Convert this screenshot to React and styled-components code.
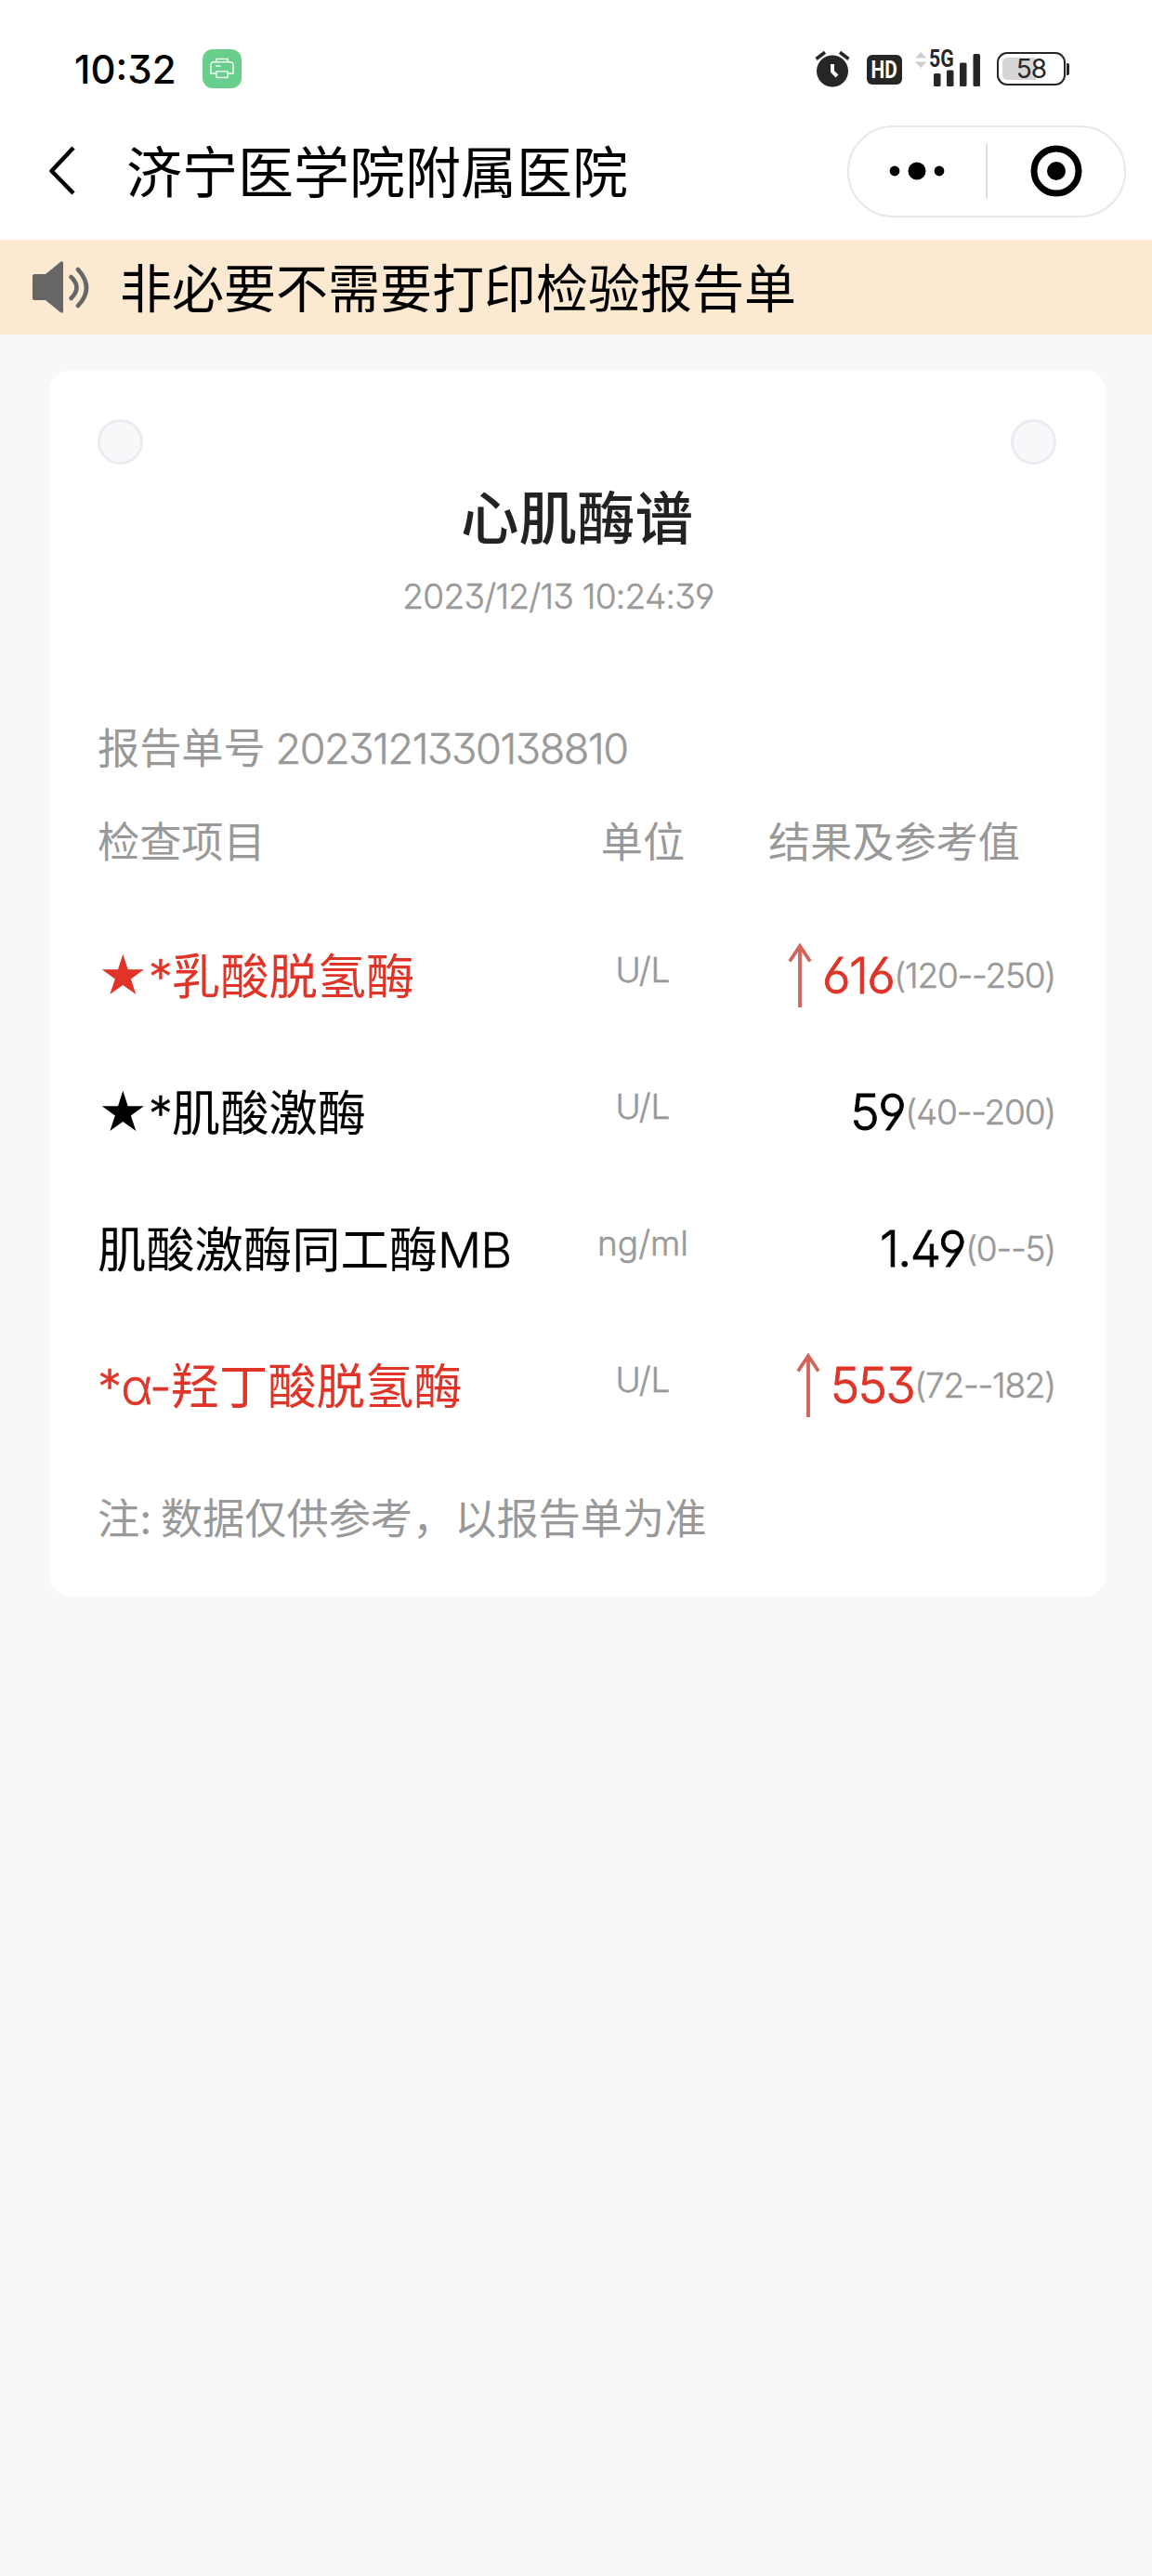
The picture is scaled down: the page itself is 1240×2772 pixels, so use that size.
import React from "react";
import styled, { createGlobalStyle } from "styled-components";

const rows = [
  { name: "★*乳酸脱氢酶", unit: "U/L", value: "616", range: "(120--250)", high: true },
  { name: "★*肌酸激酶", unit: "U/L", value: "59", range: "(40--200)" },
  { name: "肌酸激酶同工酶MB", unit: "ng/ml", value: "1.49", range: "(0--5)" },
  { name: "*α-羟丁酸脱氢酶", unit: "U/L", value: "553", range: "(72--182)", high: true },
];

const App = () => {
  return (
    <Page>
      <GlobalStyle />
      <StatusBar>
        <Clock>10:32</Clock>
        <PrinterBadge>
          <svg width="26" height="24" viewBox="0 0 26 24" fill="none" stroke="#effbf3" strokeWidth="1.6">
            <path d="M6.8 4.6V1.5h12.4v3.1M6.5 17H1V8q0-3.2 3.2-3.2h17.6Q25 4.8 25 8v9h-5.5" />
            <path d="M7 14.8h12v6.7H7zM6 9h5.5" />
          </svg>
        </PrinterBadge>
        <StatusIcons>
          <AlarmIcon />
          <HdBadge>
            <span>HD</span>
          </HdBadge>
          <Signal>
            <SignalIcon />
            <SignalLabel>5G</SignalLabel>
          </Signal>
          <Battery>
            <BatteryLevel />
            <BatteryText>58</BatteryText>
          </Battery>
          <BatteryTip />
        </StatusIcons>
      </StatusBar>

      <NavBar>
        <svg width="30" height="56" viewBox="0 0 30 56" fill="none" stroke="#000" strokeWidth="4.6" strokeLinejoin="round">
          <path d="M27 3 3.5 28 27 52" />
        </svg>
        <NavTitle>济宁医学院附属医院</NavTitle>
        <Capsule>
          <svg width="60" height="20" viewBox="0 0 60 20">
            <circle cx="6" cy="10" r="5.4" />
            <circle cx="30" cy="10" r="9.5" />
            <circle cx="54" cy="10" r="5.4" />
          </svg>
          <CapsuleLine />
          <svg width="56" height="56" viewBox="0 0 56 56">
            <circle cx="28" cy="28" r="24" fill="none" stroke="#000" strokeWidth="7" />
            <circle cx="28" cy="28" r="10" />
          </svg>
        </Capsule>
      </NavBar>

      <Notice>
        <SpeakerIcon />
        <span>非必要不需要打印检验报告单</span>
      </Notice>

      <Card>
        <Holes>
          <Hole />
          <Hole />
        </Holes>
        <Title>心肌酶谱</Title>
        <DateText>2023/12/13 10:24:39</DateText>
        <ReportNo>
          报告单号 <ReportDigits>2023121330138810</ReportDigits>
        </ReportNo>
        <HeadRow>
          <span>检查项目</span>
          <HeadUnit>单位</HeadUnit>
          <HeadResult>结果及参考值</HeadResult>
        </HeadRow>
        {rows.map((row) => (
          <Row key={row.name}>
            <Name $high={row.high}>
              {/* latin parts are set a little tighter than the chinese ones */}
              {row.name.split(/([*α\-A-Z]+)/).map((part, i) =>
                i % 2 ? <Latin key={i}>{part}</Latin> : part
              )}
            </Name>
            <Unit>{row.unit}</Unit>
            <Result>
              {row.high && <ArrowUp />}
              <Value $high={row.high}>{row.value}</Value>
              <Range>{row.range}</Range>
            </Result>
          </Row>
        ))}
        <Note>注: 数据仅供参考，以报告单为准</Note>
      </Card>
    </Page>
  );
};

const AlarmIcon = () => (
  <svg width="38" height="40" viewBox="0 0 38 40" fill="none">
    <circle cx="19" cy="22.5" r="17" fill="#262626" />
    <path d="M1.5 9.5 11 2.2M36.5 9.5 27 2.2" stroke="#262626" strokeWidth="3.6" />
    <path d="M19 15v8l5 5" stroke="#fff" strokeWidth="4" />
  </svg>
);

const SignalIcon = () => (
  <svg width="70" height="38" viewBox="0 0 70 38" fill="#262626">
    <path d="M0 7.5 6.2 1l6.3 6.5zM0 11.5h12.5L6.2 18z" fill="#d0d0d0" />
    <rect x="20" y="24" width="7.5" height="14" rx="1.5" />
    <rect x="34" y="20.5" width="7.5" height="17.5" rx="1.5" />
    <rect x="48" y="12.5" width="7.5" height="25.5" rx="1.5" />
    <rect x="62.5" y="3" width="7.5" height="35" rx="1.5" />
  </svg>
);

const SpeakerIcon = () => (
  <svg width="62" height="56" viewBox="0 0 62 56" fill="none" stroke="#666" strokeLinecap="round">
    <path d="M2 14h12L30 1q3-2 3 1v52q0 3-3 1L14 42H2q-2 0-2-2V16q0-2 2-2z" fill="#666" stroke="none" />
    <path d="M41.5 17q12 11.500 0 23" strokeWidth="4.6" />
    <path d="M49 9q18 20 0 39" strokeWidth="4.6" />
  </svg>
);

const ArrowUp = () => (
  <Arrow width="26" height="70" viewBox="0 0 26 70" fill="none" stroke="#d4625d" strokeWidth="3.8">
    <path d="M13 69V3M2 19.5 13 3l11 16.5" />
  </Arrow>
);

const GlobalStyle = createGlobalStyle`
  body {
    margin: 0;
    background: #f6f8fa;
  }
  svg {
    display: block;
    flex-shrink: 0;
  }
`;

const Page = styled.div`
  min-height: 2772px;
  background: #f6f8fa;
  color: #000;
  font-family: Inter, "Noto Sans CJK SC", sans-serif;
  font-feature-settings: "ss01";
`;

const StatusBar = styled.header`
  display: flex;
  align-items: center;
  height: 118px;
  padding: 30px 89px 0 80px;
  box-sizing: border-box;
  background: #fff;
`;

const Clock = styled.span`
  width: 138px;
  padding-top: 2px;
  font-size: 42px;
  font-weight: 450;
  line-height: 50px;
`;

const PrinterBadge = styled.div`
  display: flex;
  align-items: center;
  justify-content: center;
  width: 42px;
  height: 42px;
  border-radius: 11px;
  background: #67ce8b;
`;

const StatusIcons = styled.div`
  display: flex;
  align-items: center;
  margin-left: auto;
`;

const HdBadge = styled.div`
  display: flex;
  align-items: center;
  justify-content: center;
  width: 38px;
  height: 32px;
  margin: 2px 14px 0 18px;
  border-radius: 6px;
  background: #262626;
  color: #fff;
  font: 700 26px/32px Roboto, sans-serif;

  span {
    transform: scaleX(0.8);
  }
`;

const Signal = styled.div`
  position: relative;
  margin-right: 18px;
`;

const SignalLabel = styled.span`
  position: absolute;
  top: -4px;
  left: 15px;
  color: #262626;
  font: 700 25px/25px Roboto, sans-serif;
  transform: scaleX(0.85);
  transform-origin: left;
`;

const Battery = styled.div`
  position: relative;
  width: 74px;
  height: 36px;
  box-sizing: border-box;
  padding: 4px;
  border: 2.5px solid #262626;
  border-radius: 11px;
`;

const BatteryLevel = styled.div`
  width: 36px;
  height: 24px;
  border-radius: 5px 0 0 5px;
  background: #d6d6d6;
`;

const BatteryText = styled.span`
  position: absolute;
  inset: 0;
  color: #262626;
  font-size: 28px;
  letter-spacing: -1px;
  line-height: 32px;
  text-align: center;
`;

const BatteryTip = styled.div`
  width: 3px;
  height: 13px;
  margin-left: 1px;
  border-radius: 0 2px 2px 0;
  background: #262626;
`;

const NavBar = styled.nav`
  display: flex;
  align-items: center;
  height: 140px;
  padding: 0 28px 8px 52px;
  box-sizing: border-box;
  background: #fff;
`;

const NavTitle = styled.h1`
  margin: 4px 0 0 54px;
  font-size: 60px;
  font-weight: 400;
  line-height: 80px;
`;

const Capsule = styled.div`
  display: flex;
  align-items: center;
  width: 300px;
  height: 99px;
  margin-left: auto;
  padding: 0 43px;
  box-sizing: border-box;
  border: 2px solid #e8e8e8;
  border-radius: 50px;
`;

const CapsuleLine = styled.div`
  width: 2px;
  height: 59px;
  margin: 0 46px 0 44px;
  background: #dedede;
`;

const Notice = styled.div`
  display: flex;
  align-items: center;
  gap: 32px;
  height: 102px;
  padding-left: 35px;
  background: #fbe9d2;
  font-size: 56px;
  line-height: 102px;

  span {
    padding-top: 3px;
  }
`;

const Card = styled.main`
  width: 1138px;
  height: 1320px;
  margin: 38px 0 0 53px;
  padding: 53px 54px 0 52px;
  box-sizing: border-box;
  border-radius: 24px;
  background: #fff;
  color: #999;
`;

const Holes = styled.div`
  display: flex;
  justify-content: space-between;
`;

const Hole = styled.div`
  width: 49px;
  height: 49px;
  box-sizing: border-box;
  border: 3px solid #eaecf1;
  border-radius: 50%;
  background: #f6f8fa;
`;

const Title = styled.h2`
  margin: 13px 0 0;
  color: #222;
  font-size: 62.5px;
  font-weight: 500;
  line-height: 90px;
  text-align: center;
`;

const DateText = styled.p`
  margin: 14px 40px 0 0;
  font-size: 37px;
  font-weight: 350;
  letter-spacing: -0.7px;
  line-height: 50px;
  text-align: center;
  -webkit-text-stroke: 0.5px currentColor;
`;

const ReportNo = styled.p`
  margin: 109px 0 0;
  font-size: 45.2px;
  line-height: 60px;
`;

const ReportDigits = styled.span`
  margin-left: -2px;
  font-size: 45px;
  font-weight: 350;
  letter-spacing: -1.4px;
  -webkit-text-stroke: 0.5px currentColor;
`;

const HeadRow = styled.div`
  display: grid;
  grid-template-columns: 484px 206px 1fr;
  margin-top: 41px;
  font-size: 45.2px;
  line-height: 60px;
`;

const HeadUnit = styled.span`
  text-align: center;
`;

const HeadResult = styled.span`
  padding-right: 39px;
  text-align: right;
`;

const Row = styled.div`
  display: grid;
  grid-template-columns: 484px 206px 1fr;
  align-items: center;
  height: 147px;

  &:nth-of-type(3) {
    margin-top: 39px;
  }
`;

const Name = styled.span`
  padding-top: 2px;
  color: ${(p) => (p.$high ? "#e03428" : "#000")};
  font-size: 52.3px;
  line-height: 70px;
  white-space: nowrap;
`;

const Latin = styled.span`
  font-weight: 350;
  letter-spacing: -1px;
  -webkit-text-stroke: 0.5px currentColor;
`;

const Unit = styled.span`
  padding-bottom: 12px;
  font-size: 37px;
  font-weight: 350;
  line-height: 50px;
  text-align: center;
  -webkit-text-stroke: 0.5px currentColor;
`;

const Result = styled.div`
  display: flex;
  align-items: center;
  justify-content: flex-end;
`;

const Arrow = styled.svg`
  margin-right: 11px;
`;

const Value = styled.span`
  color: ${(p) => (p.$high ? "#e03428" : "#000")};
  font-size: 53px;
  font-weight: 350;
  letter-spacing: -1.5px;
  line-height: 70px;
  -webkit-text-stroke: 0.9px currentColor;
`;

const Range = styled.span`
  margin-right: 1px;
  font-size: 37px;
  font-weight: 350;
  letter-spacing: -1.2px;
  line-height: 50px;
  -webkit-text-stroke: 0.5px currentColor;
`;

const Note = styled.p`
  margin: 41px 0 0;
  font-size: 45.2px;
  line-height: 60px;
  word-spacing: -3px;
`;

export default App;
